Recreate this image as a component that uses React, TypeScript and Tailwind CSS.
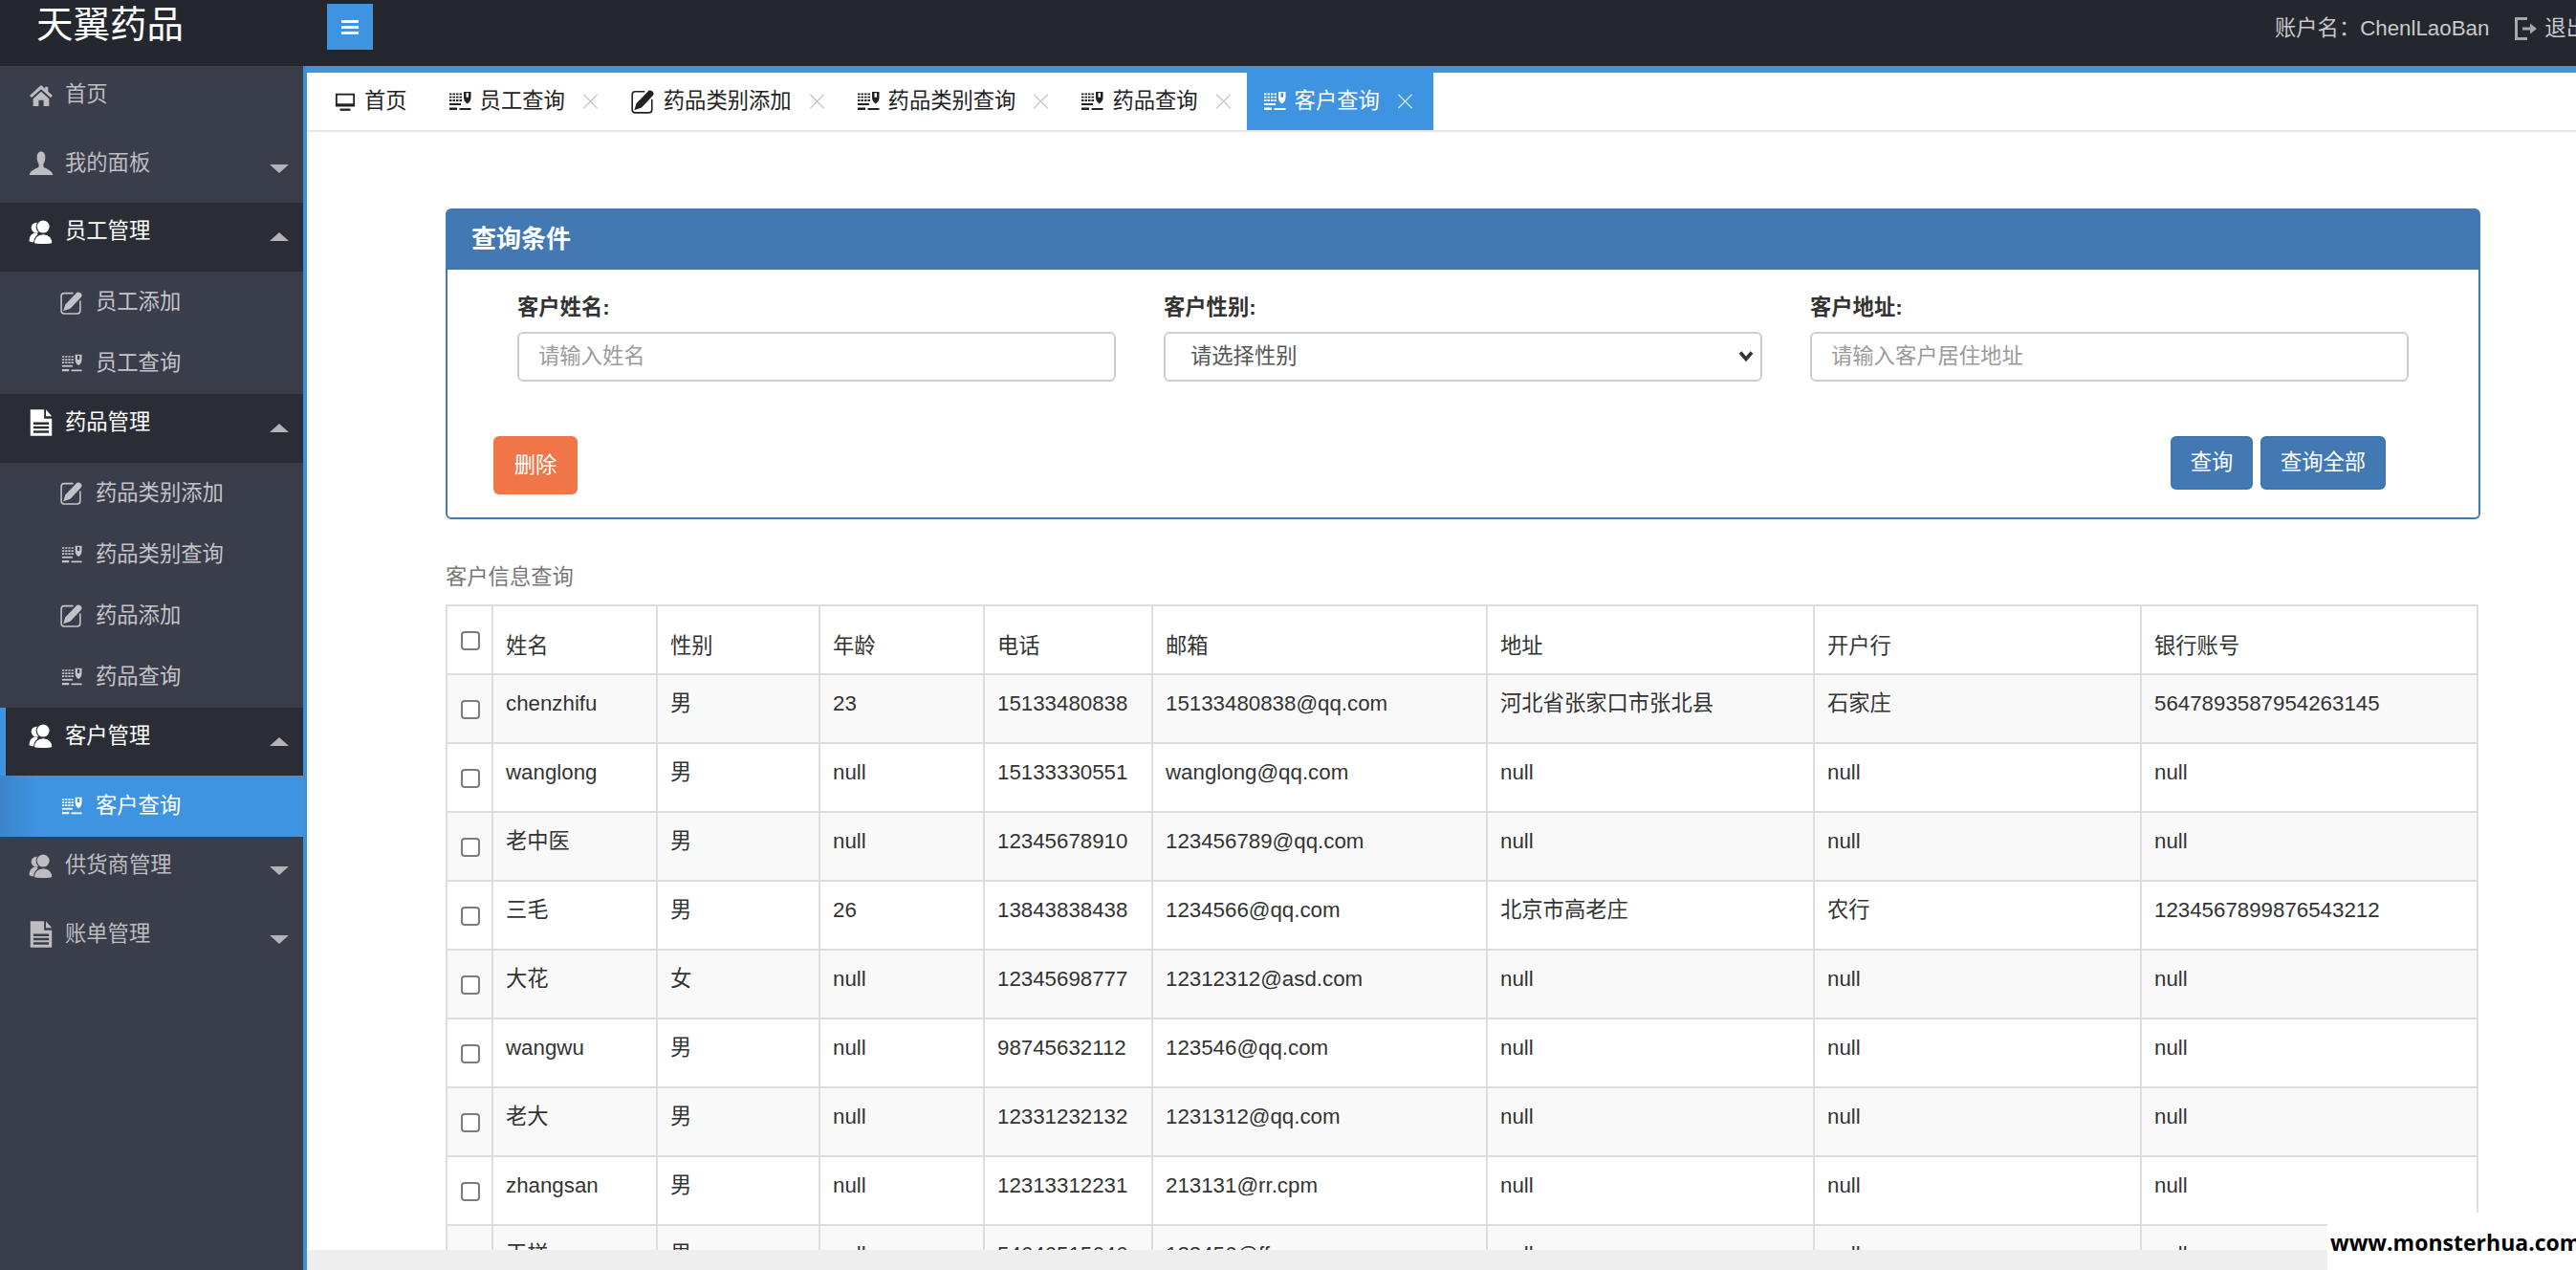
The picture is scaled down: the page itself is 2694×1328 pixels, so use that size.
import React from "react";

type IconProps = { className?: string; gap?: string };

const Home = ({ className }: IconProps) => (
  <svg viewBox="0 0 24 24" className={className} fill="currentColor">
    <path d="M12 2 L0.5 12.5 L2.5 14.5 L12 6 L21.5 14.5 L23.5 12.5 L19 8.4 V3.5 H16 V5.6z" />
    <path d="M4 15.5 L12 8.5 L20 15.5 V23 H14.5 V17 H9.5 V23 H4z" />
  </svg>
);
const UserShape = ({ className }: IconProps) => (
  <svg viewBox="0 0 24 24" className={className} fill="currentColor">
    <path d="M12 1c-2.6 0-4 2.3-4 5.5 0 2.8.8 5 1.800 6.500v2.500C8.500 17.500 2 18 .5 23.500h23C22 18 15.500 17.500 14.200 15.500V13c1-1.500 1.800-3.700 1.800-6.500C16 3.300 14.600 1 12 1z" />
  </svg>
);
const Users = ({ className, gap = "#2a2d36" }: IconProps) => (
  <svg viewBox="0 0 24 24" className={className} fill="currentColor">
    <circle cx="7.5" cy="8" r="5" />
    <path d="M.5 21c0-4 2-7 5-8h3v9H3z" />
    <circle cx="14" cy="7" r="6.500" stroke={gap} strokeWidth="1" />
    <path d="M5 23c0-5 3-9 9-9s9 4 9 9c-3 1.500-15 1.500-18 0z" stroke={gap} strokeWidth="1" />
  </svg>
);
const FileDoc = ({ className }: IconProps) => (
  <svg viewBox="0 0 24 24" className={className} fill="currentColor" fillRule="evenodd">
    <path d="M3 1h11.500v7.500H21V23H3z M5.500 11.500v2h13v-2z M5.500 15v2h13v-2z M5.500 18.500v2h13v-2z" />
    <path d="M16 1l5 5.500h-5z" />
  </svg>
);
const Edit = ({ className }: IconProps) => (
  <svg viewBox="0 0 24 24" className={className} fill="none">
    <path d="M14 2.500H5a3 3 0 0 0-3 3v14.500a3 3 0 0 0 3 3h13a3 3 0 0 0 3-3V10" stroke="currentColor" strokeWidth="1.500" />
    <path d="M6 14L17 2.500c1-1.500 3-1.500 4.500-.2s1.500 3 .2 4.500L11 18l-7 2.500z" fill="currentColor" />
  </svg>
);
const ServerCheck = ({ className }: IconProps) => (
  <svg viewBox="0 0 24 20" className={className} fill="currentColor">
    <path d="M1 1.500h2.500v1.800H1z M4.500 1.500H7v1.800H4.500z M8 1.500h2.500v1.800H8z M11.500 1.500H14v1.800h-2.500z" />
    <path d="M1 4.800h2.500v1.800H1z M4.500 4.800H7v1.800H4.500z M8 4.800h2.500v1.800H8z M11.500 4.800H14v1.800h-2.500z" />
    <path d="M1 8.100h2.500v1.800H1z M4.500 8.100H7v1.800H4.500z M8 8.100h2.500v1.800H8z M11.500 8.100H14v1.800h-2.500z" />
    <path d="M1 12h12v2H1z" />
    <path d="M1 16.500h8V19H1z M11.500 17h12v2h-12z" />
    <path fillRule="evenodd" d="M16 0h7.500v6c0 2.800-1.500 5-3.750 6.500C17.500 11 16 8.800 16 6z M18.500 1.200v4.500h2.500V1.200z" />
  </svg>
);
const Monitor = ({ className }: IconProps) => (
  <svg viewBox="0 0 24 24" className={className} fill="none" stroke="currentColor">
    <rect x="2" y="4" width="20" height="13" strokeWidth="2" />
    <path d="M2 15.500h20" strokeWidth="2" />
    <path d="M6 21.500h12" strokeWidth="2.500" />
  </svg>
);
const Close = ({ className }: IconProps) => (
  <svg viewBox="0 0 20 20" className={className} fill="none" stroke="currentColor" strokeWidth="1.500">
    <path d="M2 2l16 16M18 2L2 18" />
  </svg>
);
const Logout = ({ className }: IconProps) => (
  <svg viewBox="0 0 26 26" className={className} fill="currentColor">
    <path d="M2 1h13v3H5v18h10v3H2z" />
    <path d="M10 11.500h8V7.500l7 5.500-7 5.500v-4h-8z" />
  </svg>
);
const Caret = ({ up }: { up?: boolean }) => (
  <svg viewBox="0 0 20 9" className="ml-auto mt-[17px] h-[9px] w-[20px] shrink-0 text-[#b4b4b8]" fill="currentColor">
    <path d={up ? "M10 0L20 9H0z" : "M0 0h20L10 9z"} />
  </svg>
);

type Top = { label: string; icon: React.FC<IconProps>; open?: boolean; caret?: "up" | "down"; active?: boolean; iconCls: string };

const TopItem = ({ label, icon: I, open, caret, active, iconCls }: Top) => (
  <div
    className={
      open
        ? active
          ? "flex h-[71.7px] items-start border-l-[6px] border-[#3f94e2] bg-[#2a2d36] pl-[24px] pr-[15px] pt-[14px] text-white"
          : "flex h-[71.7px] items-start bg-[#2a2d36] pl-[30px] pr-[15px] pt-[14px] text-white"
        : "flex h-[71.7px] items-start pl-[30px] pr-[15px] pt-[14px] text-[#bdbdc2]"
    }
  >
    <span className="flex h-[32px] w-[26px] shrink-0 items-center justify-center">
      <I className={iconCls} gap={open ? "#2a2d36" : "#3a3d4a"} />
    </span>
    <span className="ml-[12px] leading-[32px]">{label}</span>
    {caret && <Caret up={caret === "up"} />}
  </div>
);

type Sub = { label: string; edit?: boolean; active?: boolean };
const SubItem = ({ label, edit, active }: Sub) => (
  <div
    className={
      active
        ? "flex h-[64px] items-center bg-linear-to-r from-[#3a85cc] via-[#3f94e2] via-[14%] to-[#3f94e2] pl-[62px] text-white"
        : "flex h-[64px] items-center pl-[62px] text-[#c4c4c8]"
    }
  >
    <span className="flex w-[25px] shrink-0 items-center justify-center">
      {edit ? <Edit className="h-[27px] w-[25px]" /> : <ServerCheck className="h-[20px] w-[22px]" />}
    </span>
    <span className="ml-[13px] leading-[32px]">{label}</span>
  </div>
);

const tabs = [
  { label: "员工查询", edit: false },
  { label: "药品类别添加", edit: true },
  { label: "药品类别查询", edit: false },
  { label: "药品查询", edit: false },
];

const cols = ["姓名", "性别", "年龄", "电话", "邮箱", "地址", "开户行", "银行账号"];
const rows = [
  ["chenzhifu", "男", "23", "15133480838", "15133480838@qq.com", "河北省张家口市张北县", "石家庄", "5647893587954263145"],
  ["wanglong", "男", "null", "15133330551", "wanglong@qq.com", "null", "null", "null"],
  ["老中医", "男", "null", "12345678910", "123456789@qq.com", "null", "null", "null"],
  ["三毛", "男", "26", "13843838438", "1234566@qq.com", "北京市高老庄", "农行", "1234567899876543212"],
  ["大花", "女", "null", "12345698777", "12312312@asd.com", "null", "null", "null"],
  ["wangwu", "男", "null", "98745632112", "123546@qq.com", "null", "null", "null"],
  ["老大", "男", "null", "12331232132", "1231312@qq.com", "null", "null", "null"],
  ["zhangsan", "男", "null", "12313312231", "213131@rr.cpm", "null", "null", "null"],
  ["王样", "男", "null", "54646515646", "123456@ff.com", "null", "null", "null"],
];

const Box = () => (
  <input type="checkbox" readOnly className="block h-[20px] w-[20px] appearance-none rounded-[4px] border-2 border-[#7b7b7b] bg-white" />
);

const inputCls =
  "block h-[52px] w-full rounded-[6px] border-2 border-[#cfcfcf] bg-white pl-[20px] text-[22.3px] text-[#555] outline-none placeholder:text-[#9a9a9a]";
const selectCls =
  "block h-[52px] w-full appearance-none rounded-[6px] border-2 border-[#cfcfcf] bg-white pl-[26px] text-[22.3px] text-[#555] outline-none";

export default function App() {
  return (
    <div className="relative flex h-[1328px] w-[2694px] flex-col overflow-hidden bg-white font-['Liberation_Sans','Noto_Sans_CJK_SC',sans-serif] text-[22.3px] text-[#333]">
      <header className="flex h-[69px] shrink-0 items-start whitespace-nowrap bg-[#25272e]">
        <div className="w-[342px] shrink-0 pl-[38px] text-[38.5px] leading-[52px] text-white">天翼药品</div>
        <button className="mt-[4px] flex h-[48px] w-[48px] shrink-0 flex-col items-center justify-center gap-[3px] bg-[#3f94e2]">
          <span className="h-[3px] w-[18px] bg-white" />
          <span className="h-[3px] w-[18px] bg-white" />
          <span className="h-[3px] w-[18px] bg-white" />
        </button>
        <div className="ml-[1989px] flex h-[60px] shrink-0 items-center text-[#c9c9cc]">
          <span>账户名：ChenlLaoBan</span>
          <Logout className="ml-[25px] h-[26px] w-[26px] text-[#a8a8ab]" />
          <span className="ml-[7px]">退出</span>
        </div>
      </header>

      <div className="flex min-h-0 flex-1">
        <aside className="w-[317px] shrink-0 bg-[#3a3d4a]">
          <TopItem label="首页" icon={Home} iconCls="h-[25px] w-[26px]" />
          <TopItem label="我的面板" icon={UserShape} caret="down" iconCls="h-[27px] w-[26px]" />
          <TopItem label="员工管理" icon={Users} open caret="up" iconCls="h-[27px] w-[26px]" />
          <SubItem label="员工添加" edit />
          <SubItem label="员工查询" />
          <TopItem label="药品管理" icon={FileDoc} open caret="up" iconCls="h-[30px] w-[30px] shrink-0" />
          <SubItem label="药品类别添加" edit />
          <SubItem label="药品类别查询" />
          <SubItem label="药品添加" edit />
          <SubItem label="药品查询" />
          <TopItem label="客户管理" icon={Users} open active caret="up" iconCls="h-[27px] w-[26px]" />
          <SubItem label="客户查询" active />
          <TopItem label="供货商管理" icon={Users} caret="down" iconCls="h-[27px] w-[26px]" />
          <TopItem label="账单管理" icon={FileDoc} caret="down" iconCls="h-[30px] w-[30px] shrink-0" />
        </aside>

        <main className="flex min-w-0 flex-1 flex-col border-l-4 border-[#3f8fd8]">
          <div className="h-[7px] shrink-0 bg-[#3f94e2]" />
          <nav className="flex h-[62px] shrink-0 items-stretch whitespace-nowrap border-b-2 border-[#e6e6e6] pl-[12px] text-[#222]">
            <div className="flex h-[60px] items-center pl-[17px] pr-[26px]">
              <Monitor className="h-[22px] w-[22px]" />
              <span className="ml-[9px]">首页</span>
            </div>
            {tabs.map((t) => (
              <div key={t.label} className="flex h-[60px] items-center pl-[17px] pr-[15px]">
                {t.edit ? <Edit className="h-[28px] w-[26px]" /> : <ServerCheck className="h-[20px] w-[24px]" />}
                <span className="ml-[9px]">{t.label}</span>
                <Close className="ml-[17px] h-[18px] w-[19px] text-[#c8c8c8]" />
              </div>
            ))}
            <div className="flex h-[60px] items-center bg-[#3f94e2] pl-[17px] pr-[20px] text-white">
              <ServerCheck className="h-[20px] w-[24px]" />
              <span className="ml-[9px]">客户查询</span>
              <Close className="ml-[17px] h-[18px] w-[19px] text-[#cfe3f7]" />
            </div>
          </nav>

          <div className="min-h-0 flex-1 overflow-hidden pl-[145px] pt-[80px]">
            <section className="w-[2128px] rounded-[6px] border-2 border-[#4379b3] pb-[24px]">
              <h3 className="h-[62px] bg-[#4379b3] pl-[25px] text-[26px] font-bold leading-[60px] text-white">查询条件</h3>
              <div className="mx-[73px] mt-[24px] grid grid-cols-3 gap-x-[50px]">
                <div>
                  <label className="mb-[9px] block font-bold leading-[32px]">客户姓名:</label>
                  <input className={inputCls} placeholder="请输入姓名" />
                </div>
                <div>
                  <label className="mb-[9px] block font-bold leading-[32px]">客户性别:</label>
                  <div className="relative">
                    <select className={selectCls} defaultValue="">
                      <option value="">请选择性别</option>
                      <option>男</option>
                      <option>女</option>
                    </select>
                    <svg viewBox="0 0 16 12" className="absolute right-[9px] top-[19px] h-[13px] w-[16px] text-[#333]" fill="none" stroke="currentColor" strokeWidth="3.5">
                      <path d="M2 2l6 7 6-7" />
                    </svg>
                  </div>
                </div>
                <div>
                  <label className="mb-[9px] block font-bold leading-[32px]">客户地址:</label>
                  <input className={inputCls} placeholder="请输入客户居住地址" />
                </div>
              </div>
              <div className="ml-[48px] mr-[97px] mt-[57px] flex items-start text-white">
                <button className="h-[61px] w-[88px] rounded-[6px] bg-[#f0764a]">删除</button>
                <button className="ml-auto h-[56px] w-[86px] rounded-[6px] border-2 border-[#3f74ac] bg-[#4379b3]">查询</button>
                <button className="ml-[8px] h-[56px] w-[131px] rounded-[6px] border-2 border-[#3f74ac] bg-[#4379b3]">查询全部</button>
              </div>
            </section>

            <p className="mt-[45px] leading-[32px] text-[#777]">客户信息查询</p>
            <table className="mt-[12px] w-[2124px] table-fixed border-collapse">
              <colgroup>
                <col className="w-[48px]" />
                <col className="w-[172px]" />
                <col className="w-[170px]" />
                <col className="w-[172px]" />
                <col className="w-[176px]" />
                <col className="w-[350px]" />
                <col className="w-[342px]" />
                <col className="w-[342px]" />
                <col className="w-[352px]" />
              </colgroup>
              <thead>
                <tr className="h-[72px]">
                  <th className="border-2 border-[#ddd] pb-[24px] pl-[14px] pt-[26px] align-top font-normal">
                    <Box />
                  </th>
                  {cols.map((c) => (
                    <th key={c} className="border-2 border-[#ddd] pb-[12px] pl-[13px] text-left align-bottom font-normal leading-[32px]">
                      {c}
                    </th>
                  ))}
                </tr>
              </thead>
              <tbody>
                {rows.map((r, i) => (
                  <tr key={i} className={i % 2 === 0 ? "h-[72px] bg-[#f9f9f9]" : "h-[72px] bg-white"}>
                    <td className="border-2 border-[#ddd] pl-[14px] pt-[26px] align-top">
                      <Box />
                    </td>
                    {r.map((v, j) => (
                      <td key={j} className="border-2 border-[#ddd] pl-[13px] pt-[14px] align-top leading-[32px]">
                        {v}
                      </td>
                    ))}
                  </tr>
                ))}
              </tbody>
            </table>
          </div>
          <footer className="h-[21px] shrink-0 bg-[#eeeeee]" />
        </main>
      </div>

      <div className="absolute bottom-0 right-0 flex h-[60px] w-[260px] items-start bg-white pl-[3px] pt-[14px] font-['Open_Sans',sans-serif] text-[23px] font-bold leading-[34px] text-black">
        www.monsterhua.com
      </div>
    </div>
  );
}
